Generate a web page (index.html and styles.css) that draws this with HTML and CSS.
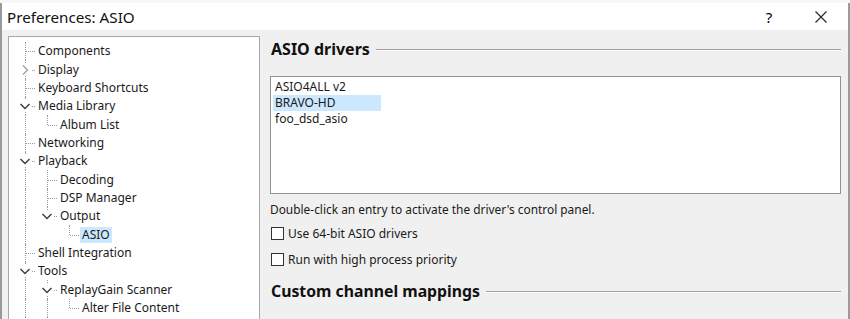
FILE: index.html
```html
<!DOCTYPE html>
<html lang="en">
<head>
  <meta charset="UTF-8">
  <link rel="stylesheet" href="styles.css">
  <title>Preferences: ASIO</title>
</head>
<body>
  <div class="behind"></div>
  <div class="window">
    <div class="titlebar">
      <span class="title">Preferences: ASIO</span>
      <span class="title-btn help">?</span>
      <span class="title-btn close">
        <svg width="12" height="12" viewBox="0 0 12 12"><path d="M0.5 0.5 L11.5 11.5 M11.5 0.5 L0.5 11.5" stroke="#222" stroke-width="1.1" fill="none"/></svg>
      </span>
    </div>

    <div class="content">
      <div class="tree">
        <div class="row"><span class="g tee"></span><span class="label">Components</span></div>
        <div class="row"><span class="g tee arrow"><svg class="chev" width="12" height="12" viewBox="0 0 12 12"><path d="M4 1.5 L8.5 6 L4 10.5" stroke="#a0a0a0" stroke-width="1.3" fill="none"/></svg></span><span class="label">Display</span></div>
        <div class="row"><span class="g tee"></span><span class="label">Keyboard Shortcuts</span></div>
        <div class="row"><span class="g tee arrow"><svg class="chev" width="12" height="12" viewBox="0 0 12 12"><path d="M1.5 4 L6 8.5 L10.5 4" stroke="#404040" stroke-width="1.5" fill="none"/></svg></span><span class="label">Media Library</span></div>
        <div class="row"><span class="g pipe"></span><span class="g ell"></span><span class="label">Album List</span></div>
        <div class="row"><span class="g tee"></span><span class="label">Networking</span></div>
        <div class="row"><span class="g tee arrow"><svg class="chev" width="12" height="12" viewBox="0 0 12 12"><path d="M1.5 4 L6 8.5 L10.5 4" stroke="#404040" stroke-width="1.5" fill="none"/></svg></span><span class="label">Playback</span></div>
        <div class="row"><span class="g pipe"></span><span class="g tee"></span><span class="label">Decoding</span></div>
        <div class="row"><span class="g pipe"></span><span class="g tee"></span><span class="label">DSP Manager</span></div>
        <div class="row"><span class="g pipe"></span><span class="g ell arrow"><svg class="chev" width="12" height="12" viewBox="0 0 12 12"><path d="M1.5 4 L6 8.5 L10.5 4" stroke="#404040" stroke-width="1.5" fill="none"/></svg></span><span class="label">Output</span></div>
        <div class="row"><span class="g pipe"></span><span class="g"></span><span class="g ell"></span><span class="label selected">ASIO</span></div>
        <div class="row"><span class="g tee"></span><span class="label">Shell Integration</span></div>
        <div class="row"><span class="g tee arrow"><svg class="chev" width="12" height="12" viewBox="0 0 12 12"><path d="M1.5 4 L6 8.5 L10.5 4" stroke="#404040" stroke-width="1.5" fill="none"/></svg></span><span class="label">Tools</span></div>
        <div class="row"><span class="g pipe"></span><span class="g tee arrow"><svg class="chev" width="12" height="12" viewBox="0 0 12 12"><path d="M1.5 4 L6 8.5 L10.5 4" stroke="#404040" stroke-width="1.5" fill="none"/></svg></span><span class="label">ReplayGain Scanner</span></div>
        <div class="row"><span class="g pipe"></span><span class="g pipe"></span><span class="g ell"></span><span class="label">Alter File Content</span></div>
        <div class="row"><span class="g pipe"></span><span class="g pipe"></span></div>
      </div>

      <div class="page">
        <div class="group-head">
          <span class="group-title">ASIO drivers</span>
          <span class="group-line"></span>
        </div>

        <div class="listbox">
          <div class="item">ASIO4ALL v2</div>
          <div class="item selected">BRAVO-HD</div>
          <div class="item">foo_dsd_asio</div>
        </div>

        <p class="note">Double-click an entry to activate the driver's control panel.</p>

        <label class="check first"><span class="box"></span>Use 64-bit ASIO drivers</label>
        <label class="check"><span class="box"></span>Run with high process priority</label>

        <div class="group-head second">
          <span class="group-title">Custom channel mappings</span>
          <span class="group-line"></span>
        </div>
      </div>
    </div>
  </div>
</body>
</html>
```

FILE: styles.css
```css
body {
  margin: 0;
  width: 850px;
  height: 319px;
  overflow: hidden;
  background-color: #ffffff;
  font-family: 'Noto Sans', 'Open Sans', sans-serif;
  color: #000000;
}

/* sliver of the window behind the dialog */
.behind {
  height: 3px;
  background-color: #f7f7f7;
  border-bottom: 0;
}

.window {
  height: 316px;
  border-left: 2px solid #9a9a9a;
  border-right: 2px solid #9a9a9a;
  box-sizing: border-box;
  background-color: #f0f0f0;
  display: flex;
  flex-direction: column;
}

.titlebar {
  height: 27px;
  background-color: #ffffff;
  display: flex;
  align-items: center;
  padding-left: 5px;
}

.title {
  font-size: 15.2px;
  flex: 1;
  color: #111;
}

.title-btn {
  display: flex;
  align-items: center;
  justify-content: center;
  height: 27px;
}

.help {
  width: 20px;
  font-size: 15px;
  margin-right: 32px;
}

.close {
  width: 20px;
  margin-right: 17px;
}

.content {
  flex: 1;
  display: flex;
  padding: 6px 0 0 6px;
  overflow: hidden;
}

/* tree view */
.tree {
  width: 252px;
  height: 300px;
  box-sizing: border-box;
  border: 1px solid #a7a7a7;
  background-color: #ffffff;
  padding: 5px 0 0 5px;
  font-size: 12px;
}

.row {
  display: flex;
  height: 18.35px;
  align-items: center;
}

.g {
  position: relative;
  width: 22px;
  height: 100%;
  flex-shrink: 0;
}

.pipe::before,
.tee::before,
.ell::before {
  content: '';
  position: absolute;
  left: 11px;
  top: 0;
  border-left: 1px dotted #9a9a9a;
}

.pipe::before,
.tee::before {
  bottom: 0;
}

.ell::before {
  height: 50%;
}

.tee::after,
.ell::after {
  content: '';
  position: absolute;
  left: 12px;
  width: 9px;
  top: 50%;
  border-top: 1px dotted #9a9a9a;
}

.arrow::after {
  left: 18px;
  width: 3px;
}

.chev {
  position: absolute;
  left: 5px;
  top: 50%;
  margin-top: -6px;
  background-color: #ffffff;
}

.label {
  padding: 0 2px;
  line-height: 16px;
  white-space: nowrap;
  color: #1a1a1a;
}

.label.selected {
  background-color: #cce8ff;
}

/* right hand page */
.page {
  width: 571px;
  margin-left: 10px;
  font-size: 12px;
}

.group-head {
  display: flex;
  align-items: center;
  height: 20px;
  margin-top: 3px;
}

.group-head.second {
  margin-top: 14px;
}

.group-title {
  font-size: 16px;
  font-weight: bold;
  color: #111;
  margin-left: 1px;
  margin-right: 6px;
  white-space: nowrap;
}

.group-head.second .group-title {
  font-size: 15.8px;
}

.group-line {
  flex: 1;
  height: 1px;
  margin-top: 2px;
  background-color: #a0a0a0;
  border-bottom: 1px solid #ffffff;
}

.listbox {
  margin-top: 17px;
  height: 118px;
  box-sizing: border-box;
  border: 1px solid #8f9298;
  background-color: #ffffff;
  padding: 2px 0 0 2px;
}

.item {
  width: 106px;
  height: 16px;
  line-height: 16px;
  padding-left: 2px;
  color: #1a1a1a;
}

.item.selected {
  background-color: #cce8ff;
}

.note {
  margin: 7px 0 0 0;
  line-height: 16px;
  font-size: 11.9px;
  color: #1a1a1a;
}

.check {
  display: flex;
  align-items: center;
  height: 16px;
  margin-top: 10px;
  margin-left: 1px;
  color: #1a1a1a;
}

.check.first {
  margin-top: 8px;
}

.box {
  width: 13px;
  height: 13px;
  box-sizing: border-box;
  border: 1px solid #333333;
  background-color: #ffffff;
  margin-right: 4px;
}
```
